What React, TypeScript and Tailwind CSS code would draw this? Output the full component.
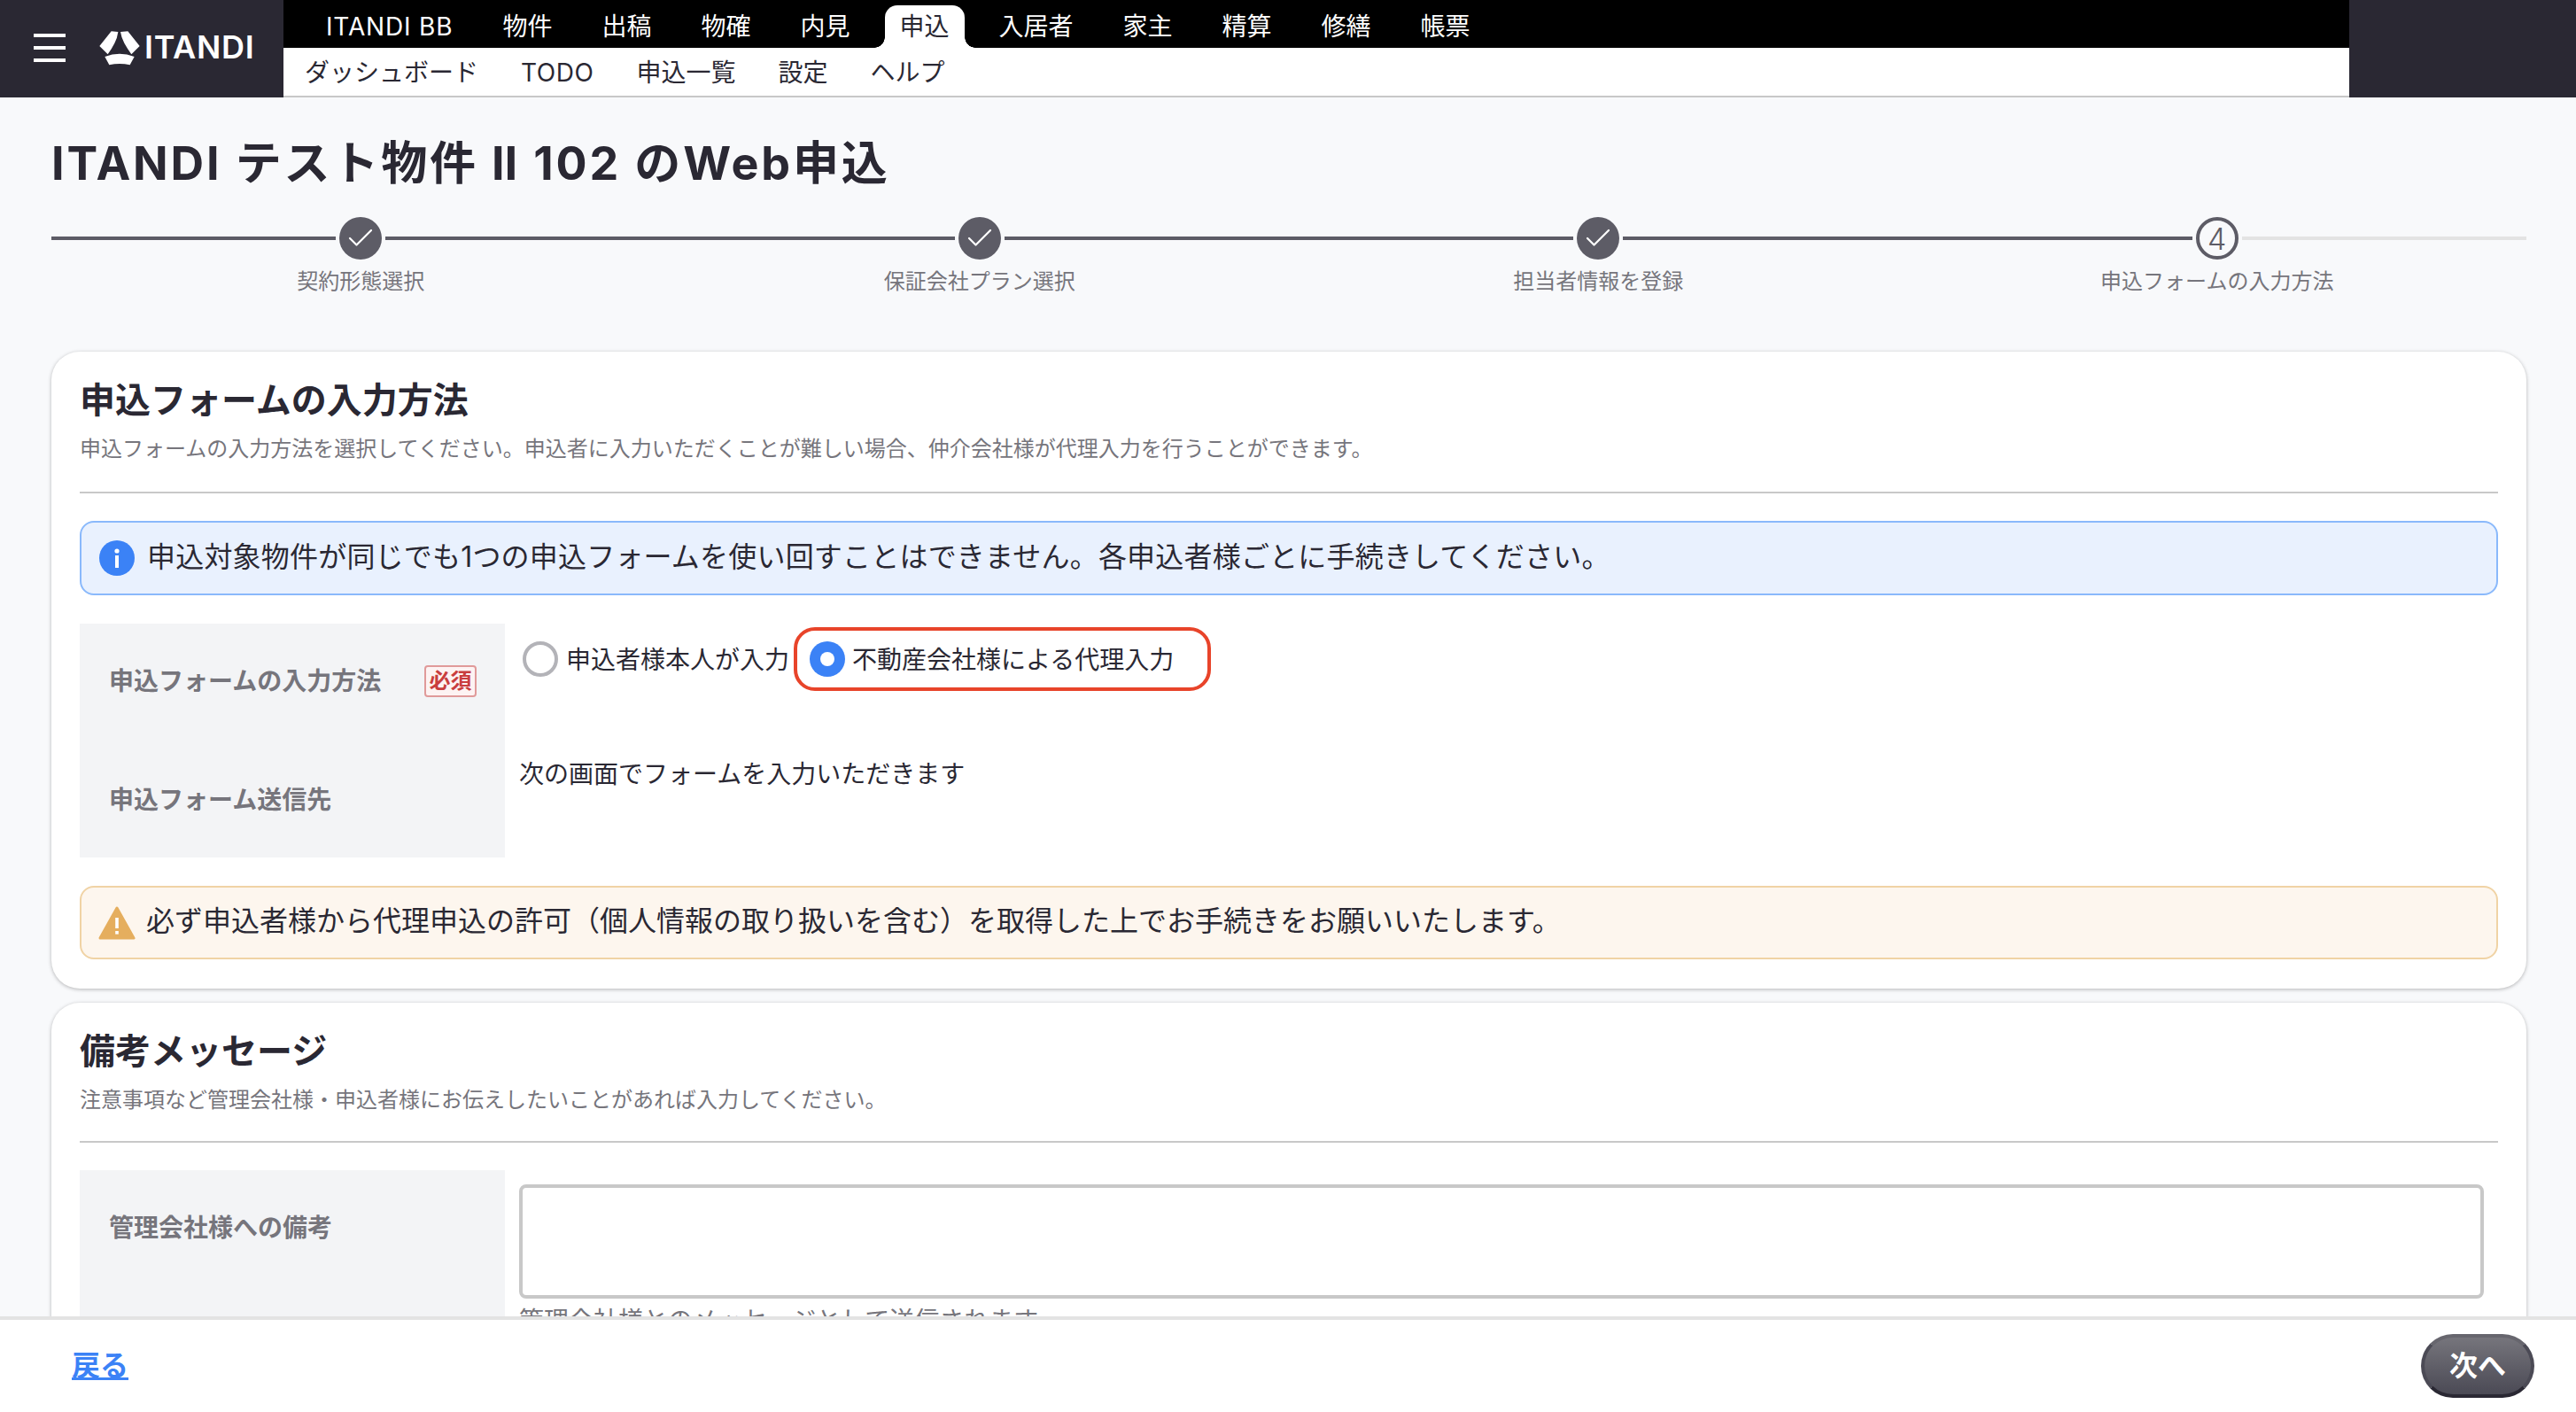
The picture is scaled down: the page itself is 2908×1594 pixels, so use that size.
import { Check } from "lucide-react"

const mainNav = ["ITANDI BB", "物件", "出稿", "物確", "内見", "申込", "入居者", "家主", "精算", "修繕", "帳票"]
const subNav = ["ダッシュボード", "TODO", "申込一覧", "設定", "ヘルプ"]
const steps = ["契約形態選択", "保証会社プラン選択", "担当者情報を登録", "申込フォームの入力方法"]

function Logo() {
  return (
    <svg viewBox="0 0 180 150" className="h-[50px] w-[60px] shrink-0" fill="#fff">
      <path d="M62 22 L85 24 Q82 46 73 62 Q64 80 50 100 L22 72 Z" />
      <path d="M93 24 L118 22 L158 72 L130 100 Q116 80 106 62 Q96 44 93 24 Z" />
      <path d="M40 108 Q90 88 140 108 L125 136 Q90 128 55 136 Z" />
    </svg>
  )
}

function Header() {
  return (
    <header className="flex h-[110px] shrink-0">
      <div className="flex w-[320px] items-start bg-[#2a2833]">
        <div className="ml-[38px] mt-[38px] flex w-[36px] flex-col gap-[10px]">
          <span className="h-[4px] bg-white" />
          <span className="h-[4px] bg-white" />
          <span className="h-[4px] bg-white" />
        </div>
        <div className="ml-[31px] mt-[28px] flex items-center">
          <Logo />
          <span className="ml-[-2px] font-['Inter'] text-[36px] font-semibold leading-[50px] tracking-[0.02em] text-white">ITANDI</span>
        </div>
      </div>
      <div className="flex flex-1 flex-col">
        <nav className="flex h-[54px] items-end gap-[22px] bg-black pl-[31px]">
          {mainNav.map((item) =>
            item === "申込" ? (
              <span
                key={item}
                className="relative flex h-[48px] items-center rounded-t-[14px] bg-white px-[17px] text-[28px] text-[#2a2833]"
              >
                {item}
                <span className="absolute bottom-0 left-[-12px] h-[12px] w-[12px] bg-[radial-gradient(circle_at_0_0,#000_11.5px,#fff_12px)]" />
                <span className="absolute bottom-0 right-[-12px] h-[12px] w-[12px] bg-[radial-gradient(circle_at_100%_0,#000_11.5px,#fff_12px)]" />
              </span>
            ) : (
              <span
                key={item}
                className={`flex h-[48px] items-center px-[17px] text-[28px] text-white ${item === "ITANDI BB" ? "tracking-[0.03em]" : ""}`}
              >
                {item}
              </span>
            ),
          )}
        </nav>
        <nav className="flex h-[56px] items-center gap-[48px] border-b-2 border-[#c8c8c8] bg-white pl-[24px] pt-[2px] text-[28px] text-[#2a2833]">
          {subNav.map((item) => (
            <span key={item} className={item === "TODO" ? "tracking-[0.02em]" : ""}>
              {item}
            </span>
          ))}
        </nav>
      </div>
      <div className="w-[256px] bg-[#2a2833]" />
    </header>
  )
}

function Stepper() {
  return (
    <div className="flex">
      {steps.map((label, i) => (
        <div key={label} className="flex flex-1 flex-col items-center">
          <div className="flex w-full items-center gap-[4px]">
            <span className="h-[4px] flex-1 bg-[#5d5c66]" />
            {i < 3 ? (
              <span className="flex h-[48px] w-[48px] items-center justify-center rounded-full bg-[#5d5c66]">
                <Check size={36} strokeWidth={1.5} color="#fff" />
              </span>
            ) : (
              <span className="flex h-[48px] w-[48px] items-center justify-center rounded-full border-[4px] border-[#5d5c66] font-['Inter'] text-[34px] font-light text-[#5d5c66]">
                4
              </span>
            )}
            <span className={`h-[4px] flex-1 ${i === 3 ? "bg-[#e3e3e3]" : "bg-[#5d5c66]"}`} />
          </div>
          <span className="mt-[7px] text-[24px] leading-[36px] text-[#76757c]">{label}</span>
        </div>
      ))}
    </div>
  )
}

function SectionHeading({ title, note, pad }: { title: string; note: string; pad: string }) {
  return (
    <div className={`border-b-2 border-[#c8c8c8] ${pad}`}>
      <h2 className="text-[40px] font-bold leading-[60px] text-[#2a2833]">{title}</h2>
      <p className="mt-[7px] text-[24px] leading-[36px] text-[#76757c]">{note}</p>
    </div>
  )
}

function Card({ children }: { children: React.ReactNode }) {
  return (
    <section className="rounded-[32px] bg-white px-[32px] pb-[33px] pt-[25px] shadow-[0_1px_4px_rgba(0,0,0,0.28)]">
      {children}
    </section>
  )
}

function MethodCard() {
  return (
    <Card>
      <SectionHeading
        title="申込フォームの入力方法"
        note="申込フォームの入力方法を選択してください。申込者に入力いただくことが難しい場合、仲介会社様が代理入力を行うことができます。"
        pad="pb-[30px]"
      />
      <div className="mt-[31px] flex h-[84px] items-center rounded-[16px] border-2 border-[#8ab9fb] bg-[#e9f1fe] pl-[20px] text-[32px] text-[#2a2833]">
        <svg viewBox="0 0 40 40" className="h-[40px] w-[40px] shrink-0">
          <circle cx="20" cy="20" r="20" fill="#3b82f6" />
          <circle cx="20" cy="12" r="2.6" fill="#fff" />
          <rect x="18" y="17" width="4" height="14" fill="#fff" />
        </svg>
        <span className="ml-[14px] whitespace-nowrap pb-[3px] tracking-[0.2px]">
          申込対象物件が同じでも1つの申込フォームを使い回すことはできません。各申込者様ごとに手続きしてください。
        </span>
      </div>
      <div className="mt-[32px]">
        <div className="flex h-[130px]">
          <div className="flex w-[480px] shrink-0 items-center justify-between bg-[#f3f4f6] pl-[33px] pr-[32px]">
            <span className="text-[28px] font-bold text-[#76757c]">申込フォームの入力方法</span>
            <span className="flex h-[36px] w-[59px] items-center justify-center rounded-[4px] border-2 border-[#e09a9a] bg-[#fdf3f3] text-[24px] font-bold text-[#c93e3e]">
              必須
            </span>
          </div>
          <div className="ml-[20px] mt-[4px] flex h-[72px] items-center text-[28px] text-[#2a2833]">
            <span className="h-[40px] w-[40px] rounded-full border-[4px] border-[#b3b3b8] bg-white" />
            <span className="ml-[9px] pt-[2px]">申込者様本人が入力</span>
            <div className="ml-[5px] flex h-[72px] w-[471px] items-center rounded-[24px] border-[4px] border-[#e8442a] pl-[14px]">
              <span className="flex h-[40px] w-[40px] items-center justify-center rounded-full bg-[#3b82f6]">
                <span className="h-[16px] w-[16px] rounded-full bg-white" />
              </span>
              <span className="ml-[8px] pt-[2px]">不動産会社様による代理入力</span>
            </div>
          </div>
        </div>
        <div className="flex h-[134px]">
          <div className="flex w-[480px] shrink-0 items-center bg-[#f3f4f6] pl-[33px] pt-[4px] text-[28px] font-bold text-[#76757c]">
            申込フォーム送信先
          </div>
          <p className="ml-[16px] pt-[20px] text-[28px] leading-[40px] text-[#2a2833]">次の画面でフォームを入力いただきます</p>
        </div>
      </div>
      <div className="mt-[32px] flex h-[83px] items-center rounded-[16px] border-2 border-[#f0d3a5] bg-[#fdf6ee] pl-[19px] text-[32px] text-[#2a2833]">
        <svg viewBox="0 0 42 38" className="h-[38px] w-[42px] shrink-0">
          <path d="M21 2 L40 36 H2 Z" fill="#e5ae5e" stroke="#e5ae5e" strokeWidth="3" strokeLinejoin="round" />
          <rect x="19.2" y="13" width="3.6" height="12" fill="#fff" />
          <rect x="19.2" y="28" width="3.6" height="3.6" fill="#fff" />
        </svg>
        <span className="ml-[12px] whitespace-nowrap pb-[3px]">
          必ず申込者様から代理申込の許可（個人情報の取り扱いを含む）を取得した上でお手続きをお願いいたします。
        </span>
      </div>
    </Card>
  )
}

function NoteCard() {
  return (
    <Card>
      <SectionHeading
        title="備考メッセージ"
        note="注意事項など管理会社様・申込者様にお伝えしたいことがあれば入力してください。"
        pad="pb-[28px]"
      />
      <div className="mt-[31px] flex">
        <div className="h-[280px] w-[480px] shrink-0 bg-[#f3f4f6] pl-[33px] pt-[45px] text-[28px] font-bold leading-[40px] text-[#76757c]">
          管理会社様への備考
        </div>
        <div className="ml-[16px] mr-[16px] flex-1 pt-[16px]">
          <textarea className="block h-[129px] w-full resize-none rounded-[8px] border-[4px] border-[#c8c8c8] bg-white" />
          <p className="mt-[5px] text-[28px] leading-[40px] text-[#76757c]">管理会社様とのメッセージとして送信されます</p>
        </div>
      </div>
    </Card>
  )
}

export default function App() {
  return (
    <div className="flex h-[1594px] flex-col overflow-hidden bg-[#f8f9fb] font-['Inter','Noto_Sans_CJK_JP',sans-serif]">
      <Header />
      <main className="min-h-0 flex-1 overflow-hidden pl-[58px] pr-[56px]">
        <h1 className="mt-[40px] text-[52px] font-bold leading-[70px] tracking-[0.055em] text-[#2a2833]">ITANDI テスト物件 Ⅱ 102 のWeb申込</h1>
        <div className="mt-[25px]">
          <Stepper />
        </div>
        <div className="mt-[61px] flex flex-col gap-[16px]">
          <MethodCard />
          <NoteCard />
        </div>
      </main>
      <footer className="flex h-[108px] shrink-0 items-center justify-between border-t-4 border-[#e3e3e3] bg-white pl-[81px] pr-[47px]">
        <a className="text-[32px] font-bold text-[#3b82f6] underline">戻る</a>
        <button className="h-[72px] w-[128px] rounded-full border-[4px] border-x-[#4b4a55] border-b-[#2a2833] border-t-[#67666e] bg-gradient-to-b from-[#76757c] to-[#4b4a55] text-[32px] font-bold text-white">
          次へ
        </button>
      </footer>
    </div>
  )
}
